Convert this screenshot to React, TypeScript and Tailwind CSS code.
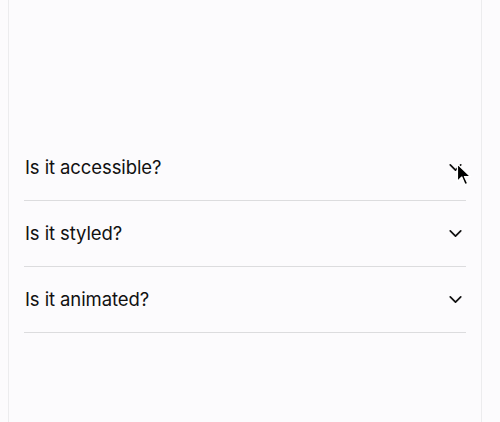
import { ChevronDown } from "lucide-react"

const items = ["Is it accessible?", "Is it styled?", "Is it animated?"]

function Cursor() {
  return (
    <svg
      className="absolute left-[456px] top-[163px] pointer-events-none"
      width="18"
      height="26"
      viewBox="0 0 16 24"
    >
      <path
        d="M1 1 L1 17 L5 13 L8 20 L10.5 19 L7.5 12.5 L13 12.5 Z"
        fill="#000"
        stroke="#fff"
        strokeWidth="1.2"
        strokeLinejoin="round"
      />
    </svg>
  )
}

export default function App() {
  return (
    <div className="relative h-[422px] w-[500px] overflow-hidden bg-[#fcfbfd] font-['Inter',sans-serif] text-[#111]">
      <div className="ml-[8px] h-full w-[474px] border-x border-[#ececee] px-[15px] pt-[135px]">
        {items.map((label) => (
          <div key={label} className="border-b border-[#dcdcde]">
            <button className="flex h-[65px] w-full items-center justify-between pl-px text-left">
              <span className="text-[18.5px] tracking-[-0.1px]">{label}</span>
              <ChevronDown size={21} strokeWidth={2} className="text-[#111]" />
            </button>
          </div>
        ))}
      </div>
      <Cursor />
    </div>
  )
}
